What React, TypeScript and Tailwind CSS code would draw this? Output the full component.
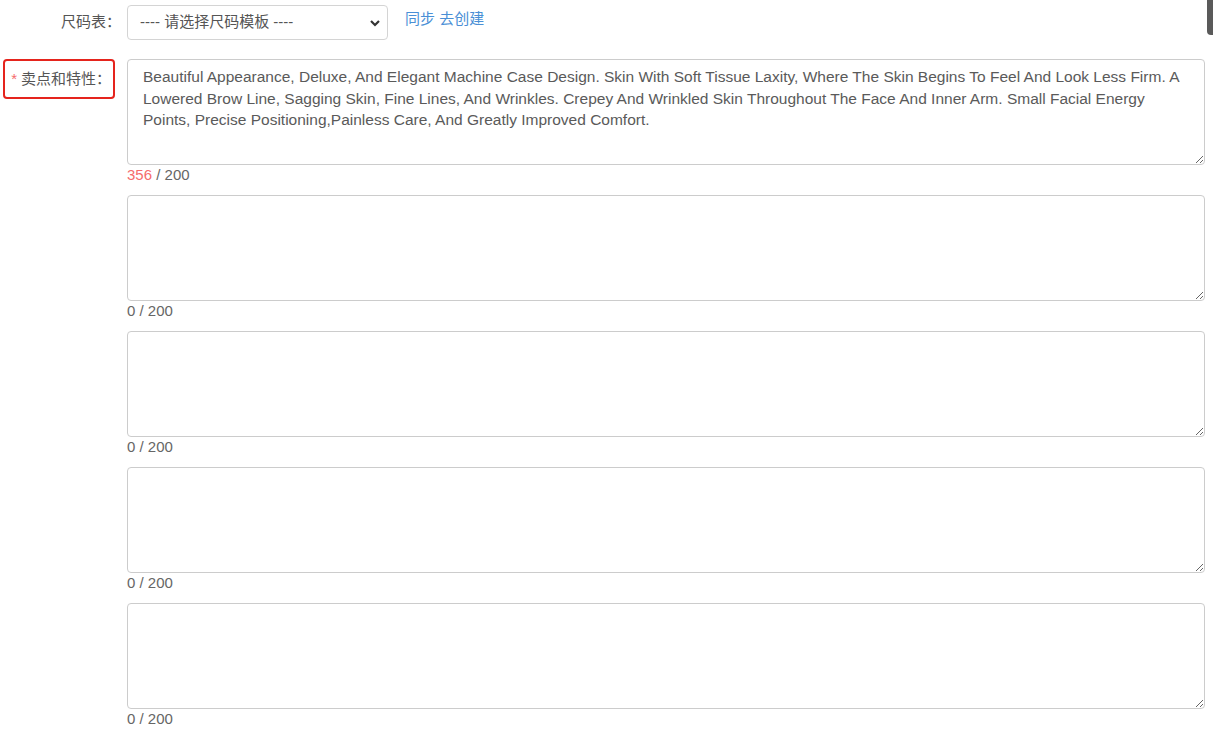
import React from 'react';

const FEATURE_TEXT =
  'Beautiful Appearance, Deluxe, And Elegant Machine Case Design. Skin With Soft Tissue Laxity, Where The Skin Begins To Feel And Look Less Firm. A Lowered Brow Line, Sagging Skin, Fine Lines, And Wrinkles. Crepey And Wrinkled Skin Throughout The Face And Inner Arm. Small Facial Energy Points, Precise Positioning,Painless Care, And Greatly Improved Comfort.';

const fields = [FEATURE_TEXT, '', '', '', ''];

const font = "font-['Liberation_Sans','Noto_Sans_CJK_SC',sans-serif]";

const FeatureBox = ({ value }: { value: string }) => {
  const over = value.length > 200;
  return (
    <div className="mb-[10px]">
      <textarea
        readOnly
        value={value}
        className={`block w-full h-[106px] rounded-[4px] border border-[#cccccc] bg-white pl-[15px] pr-[12px] pt-[6px] text-[15.5px] leading-[21.5px] text-[#5a5a5a] outline-none ${font}`}
      />
      <div className="h-[20px] text-[15px] leading-[20px] text-[#666]">
        <span className={over ? 'text-[#f56c6c]' : ''}>{value.length}</span> / 200
      </div>
    </div>
  );
};

export default function App() {
  return (
    <div className={`relative min-h-[731px] bg-white ${font}`}>
      <div className="absolute right-0 top-0 h-[35px] w-[6px] rounded-bl-[4px] bg-[#5a5a5a]" />

      <div className="flex items-center pt-[5px]">
        <div className="w-[127px] pr-[6px] text-right text-[15px] text-[#555]">尺码表：</div>
        <div className="relative w-[261px]">
          <select className="block h-[35px] w-full appearance-none rounded-[4px] border border-[#d4d4d4] bg-white pl-[12px] text-[15px] text-[#555] outline-none">
            <option>---- 请选择尺码模板 ----</option>
          </select>
          <svg
            className="pointer-events-none absolute right-[7px] top-[12px]"
            width="12"
            height="12"
            viewBox="0 0 12 12"
          >
            <path d="M2 4l4 4 4-4" fill="none" stroke="#333" strokeWidth="2.2" />
          </svg>
        </div>
        <div className="ml-[17px] -mt-[6px] text-[15px] text-[#4a8fd6]">
          同步 去创建
        </div>
      </div>

      <div className="mt-[19px] flex">
        <div className="w-[127px] pl-[3px] pr-[12px]">
          <div className="flex h-[40px] items-center justify-end rounded-[4px] border-2 border-[#e5241d] pr-[2px] text-[15px] text-[#555]">
            <span className="mr-[4px] text-[#f56c6c]">*</span>卖点和特性：
          </div>
        </div>
        <div className="mr-[8px] flex-1">
          {fields.map((v, i) => (
            <FeatureBox key={i} value={v} />
          ))}
        </div>
      </div>
    </div>
  );
}
